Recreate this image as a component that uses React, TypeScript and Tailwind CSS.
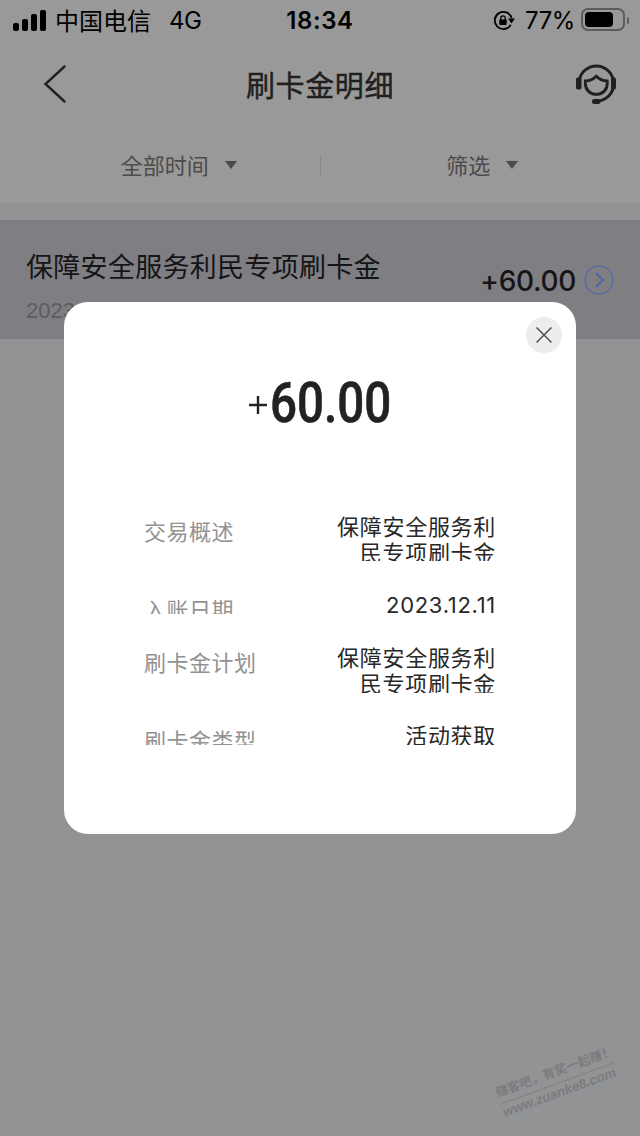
import { clsx } from "clsx";

interface DetailItem {
  label: string;
  value: string[];
  rowClass: string;
}

const details: DetailItem[] = [
  { label: "交易概述", value: ["保障安全服务利", "民专项刷卡金"], rowClass: "h-[47px] mb-[31px]" },
  { label: "入账日期", value: ["2023.12.11"], rowClass: "h-[22px] mb-[31px]" },
  { label: "刷卡金计划", value: ["保障安全服务利", "民专项刷卡金"], rowClass: "h-[48px] mb-[30px]" },
  { label: "刷卡金类型", value: ["活动获取"], rowClass: "h-[22px]" },
];

function StatusBar() {
  return (
    <div className="h-10 flex items-center justify-between pl-[13px] pr-[11px] text-black text-2xl leading-none">
      <div className="w-[220px] flex items-center">
        <div className="flex items-end gap-[3px] h-[21px] mr-[9px]">
          <span className="w-[6px] h-[8px] bg-black rounded-[2px]"></span>
          <span className="w-[6px] h-[12px] bg-black rounded-[2px]"></span>
          <span className="w-[6px] h-[17px] bg-black rounded-[2px]"></span>
          <span className="w-[6px] h-[21px] bg-black rounded-[2px]"></span>
        </div>
        <span className="pt-[3px] whitespace-nowrap">中国电信</span>
        <span className="pt-[2px] ml-[18px] tracking-[-0.5px]">4G</span>
      </div>
      <span className="pt-[2px] pr-[2px] font-semibold tracking-[0.6px]">18:34</span>
      <div className="w-[220px] flex items-center justify-end">
        <svg width="22" height="22" viewBox="0 0 22 22" className="mt-px mr-[10px]">
          <path d="M17.8 14.8A8.6 8.6 0 1 1 18.6 8" fill="none" stroke="black" strokeWidth="1.8" />
          <path d="M15 8.5h7l-3.5 5z" fill="black" />
          <rect x="6.3" y="9.4" width="7.4" height="5.6" rx="1" fill="black" />
          <path d="M7.8 10V8a2.2 2.2 0 0 1 4.4 0v2" fill="none" stroke="black" strokeWidth="1.3" />
        </svg>
        <span className="pt-[2px] mr-[6px] tracking-[-0.4px]">77%</span>
        <div className="w-[44px] h-[23px] -mt-px border-2 border-[#5c5c5c] rounded-[7px] p-[2px]">
          <div className="w-[28px] h-[15px] bg-black rounded-[4px]"></div>
        </div>
        <span className="w-[2px] h-[7px] ml-[2px] bg-[#5c5c5c] rounded-r"></span>
      </div>
    </div>
  );
}

function NavBar() {
  return (
    <div className="h-[88px] grid grid-cols-[1fr_auto_1fr] items-center pl-[43px] pr-[43px] text-[#202020]">
      <svg width="50" height="40" viewBox="0 0 50 40" fill="none" stroke="currentColor" strokeWidth="2.4">
        <path d="M21.5 2.5L2.5 20L21.5 37.5" strokeLinecap="round" />
      </svg>
      <h1 className="pt-[4px] text-[29px] leading-none tracking-[0.6px] [-webkit-text-stroke:0.4px_#202020]">刷卡金明细</h1>
      <svg
        width="42"
        height="42"
        viewBox="0 0 42 42"
        fill="none"
        stroke="currentColor"
        strokeWidth="3"
        className="justify-self-end -mr-5 -mt-px"
      >
        <path d="M4.6 16a17.2 17.2 0 0 1 33.4 0M38.2 25C36 33 29 38 20 38.6" />
        <path
          d="M10.4 18c4.600-.2 8.200-1.800 10.900-4.700 2.700 2.900 6.300 4.500 10.900 4.700v3c0 5.900-4.800 10.400-10.900 10.400s-10.900-4.500-10.900-10.400z"
          strokeWidth="2.9"
        />
        <rect x="1" y="14.5" width="5.5" height="12" rx="1.8" fill="currentColor" stroke="none" />
        <rect x="36" y="14.5" width="5" height="12" rx="1.8" fill="currentColor" stroke="none" />
        <rect x="17" y="36" width="8.5" height="5" rx="2.5" fill="currentColor" stroke="none" />
      </svg>
    </div>
  );
}

function Filter({ text, className }: { text: string; className?: string }) {
  return (
    <div className={clsx("w-[320px] flex items-center justify-center gap-4", className)}>
      <span className="pt-px">{text}</span>
      <svg width="12" height="8" viewBox="0 0 12 8" fill="#4b4b4b" className="-mt-px">
        <path d="M0 0h12L6 8z" />
      </svg>
    </div>
  );
}

function DetailModal() {
  return (
    <div className="absolute left-16 top-[302px] w-[512px] h-[532px] bg-white rounded-[24px] pt-[78px]">
      <button className="absolute top-[15px] right-[14px] w-9 h-9 rounded-full bg-[#ededed] flex items-center justify-center">
        <svg width="16" height="16" viewBox="0 0 16 16" stroke="#505050" strokeWidth="1.5">
          <path d="M.5.5l15 15M15.5.5l-15 15" />
        </svg>
      </button>
      <div className="h-[46px] pl-[185px] flex items-center text-[#222]">
        <svg width="18" height="18" viewBox="0 0 18 18" stroke="currentColor" strokeWidth="2.4" className="mt-1">
          <path d="M0 9h18M9 0v18" />
        </svg>
        <span className="ml-[3px] font-['Roboto'] font-medium text-[55px] leading-none origin-left scale-x-[.865] [-webkit-text-stroke:0.6px_#222]">
          60.00
        </span>
      </div>
      <div className="pt-[88px] pl-20 pr-20 text-[22px]">
        {details.map((item) => (
          <div key={item.label} className={clsx("flex justify-between overflow-hidden", item.rowClass)}>
            <span className="pt-[5px] leading-[26px] tracking-[0.5px] text-[#929292]">{item.label}</span>
            <div className="text-right leading-[26px] tracking-[0.7px] text-[#282828]">
              {item.value.map((line) => (
                <p key={line}>{line}</p>
              ))}
            </div>
          </div>
        ))}
      </div>
    </div>
  );
}

function App() {
  return (
    <div className="relative w-[640px] h-[1136px] overflow-hidden bg-[#929395] font-['Inter','Noto_Sans_CJK_SC',sans-serif]">
      <header className="bg-[#999]">
        <StatusBar />
        <NavBar />
        <div className="h-[75px] flex items-center text-[22px] leading-none text-[#4b4b4b]">
          <Filter text="全部时间" className="pl-[38px]" />
          <span className="w-px h-5 bg-[#8a8a8a]"></span>
          <Filter text="筛选" className="pl-[4px]" />
        </div>
      </header>

      <div className="mt-[17px] h-[119px] bg-[#7f7e82] flex justify-between pl-[26px] pr-[26px]">
        <div className="pt-[33px]">
          <p className="text-[27px] leading-[30px] tracking-[0.3px] text-[#151517]">保障安全服务利民专项刷卡金</p>
          <p className="mt-[15px] font-['Liberation_Sans'] text-[22px] leading-[26px] text-[#5e5d61]">2023.12.11</p>
        </div>
        <div className="flex items-center gap-2">
          <span className="pt-[3px] text-[28px] font-medium tracking-[-0.3px] text-[#151517]">+60.00</span>
          <svg width="30" height="30" viewBox="0 0 30 30" fill="none" stroke="#4a68a5">
            <circle cx="15" cy="15" r="14" strokeWidth="1.1" />
            <path d="M12 8l7 7-7 7" strokeWidth="1.8" />
          </svg>
        </div>
      </div>

      <DetailModal />

      {/* Watermark */}
      <div className="absolute left-[496px] top-[1063px] w-[122px] -rotate-[20deg] font-['Liberation_Sans','Noto_Sans_CJK_SC',sans-serif] font-bold text-[#7b7c7e]">
        <p className="pb-[2px] text-[12.5px] leading-[18px] border-b border-[#808183] whitespace-nowrap">赚客吧，有奖一起赚！</p>
        <p className="pt-px text-[13.5px] leading-[16px] italic whitespace-nowrap">www.zuanke8.com</p>
      </div>
    </div>
  );
}

export default App;
